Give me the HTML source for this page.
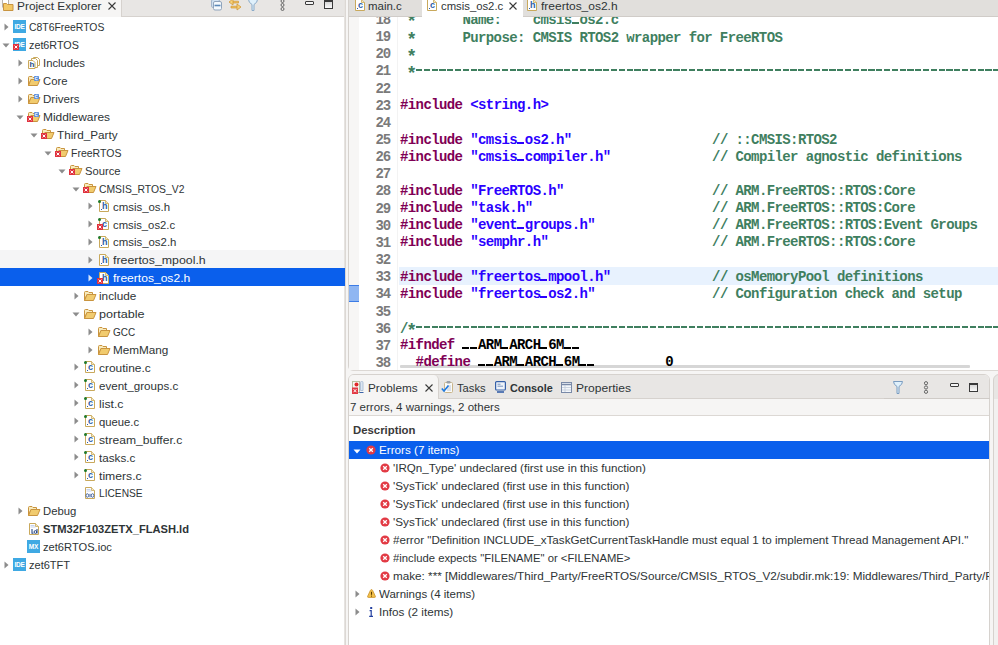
<!DOCTYPE html><html><head><meta charset="utf-8"><style>
*{margin:0;padding:0;box-sizing:border-box}
html,body{width:998px;height:645px;overflow:hidden;background:#fff;font-family:"Liberation Sans",sans-serif;font-size:12px;color:#2e3436}
.a{position:absolute}
.t{position:absolute;white-space:nowrap}
.code{position:absolute;font-family:"Liberation Mono",monospace;font-weight:bold;font-size:14px;letter-spacing:-0.6px;white-space:pre;line-height:17.15px;height:17.15px}
.ln{position:absolute;font-family:"Liberation Mono",monospace;font-weight:bold;font-size:14px;letter-spacing:-1.1px;color:#7a7a7a;text-align:right;width:40px;line-height:17.15px}
.ast{display:inline-block;width:7.8px;font-size:18px;position:relative;top:3px;left:-1.5px;letter-spacing:0}
.us{display:inline-block;width:7.8px;height:2px;background:linear-gradient(90deg,transparent 0.5px,currentColor 0.5px,currentColor 7.3px,transparent 7.3px);vertical-align:baseline}
.kw{color:#7f0055}.st{color:#2a00ff}.cm{color:#3f7f5f}.pl{color:#000}
svg{position:absolute}
</style></head><body>
<div class="a" style="left:0;top:0;width:345px;height:645px;background:#fff"></div>
<div class="a" style="left:0;top:0;width:345px;height:17px;background:#e8e6e4;border-bottom:1px solid #d6d2ce"></div>
<div class="a" style="left:0;top:0;width:122px;height:17px;background:#f6f5f4;border-right:1px solid #d6d2ce"></div>
<svg style="left:2px;top:-1px" width="12" height="12" viewBox="0 0 12 12"><rect x="0.5" y="0" width="6" height="8" fill="#fff" stroke="#b9b3aa"/><path d="M1.5 4.5h3l1 1h5.5v6h-9.5z" fill="#f3c865" stroke="#c89440"/></svg>
<div class="t" style="left:17px;top:-3.50px;font-size:11.5px;line-height:18px;font-weight:normal;color:#2e3436;transform:scaleX(1.0329);transform-origin:0 0;">Project Explorer</div>
<svg style="left:108px;top:2px" width="8" height="8" viewBox="0 0 8 8"><path d="M0.5 0.5L7.5 7.5M7.5 0.5L0.5 7.5" stroke="#3a3a3a" stroke-width="1.1"/></svg>
<svg style="left:211px;top:-1px" width="11" height="12" viewBox="0 0 11 12"><rect x="0.5" y="0.5" width="8" height="8" rx="1.5" fill="#cfe0f0" stroke="#a4b6cc"/><rect x="2.5" y="2.5" width="8" height="8.5" rx="1.5" fill="#f4f9fd" stroke="#90a4bc"/><path d="M3.5 6.5h6" stroke="#5a88b8" stroke-width="1.6"/></svg>
<svg style="left:228px;top:-1px" width="14" height="12" viewBox="0 0 14 12"><path d="M4.5 2.2H10.5V4H4.5z" fill="#f0c060" stroke="#d09838" stroke-width="0.7"/><path d="M1 3L5 0V6Z" fill="#f7d27a" stroke="#d09838" stroke-width="0.8"/><path d="M3 7.2H9.5V9H3z" fill="#f0c060" stroke="#d09838" stroke-width="0.7"/><path d="M13 8L9 5V11Z" fill="#f7d27a" stroke="#d09838" stroke-width="0.8"/></svg>
<svg style="left:248px;top:-1px" width="10" height="12" viewBox="0 0 10 12"><path d="M0.5 0.5h9Q9.5 3.5 6 5.5v6h-2v-6Q0.5 3.5 0.5 0.5z" fill="#dff0fb" stroke="#8aaac8"/></svg>
<svg style="left:280px;top:-1px" width="5" height="12" viewBox="0 0 5 12"><circle cx="2.5" cy="2" r="1.5" fill="none" stroke="#666"/><circle cx="2.5" cy="6" r="1.5" fill="none" stroke="#666"/><circle cx="2.5" cy="10" r="1.5" fill="none" stroke="#666"/></svg>
<div class="a" style="left:305px;top:1px;width:9px;height:4px;border:1px solid #3a3a3a;border-radius:1px;background:#f4f4f4"></div>
<div class="a" style="left:324px;top:0px;width:9px;height:9px;border:1px solid #3a3a3a;border-top-width:2px;background:linear-gradient(#d8d8d8,#fafafa)"></div>
<div class="a" style="left:344px;top:0;width:1px;height:645px;background:#e6e3e0"></div>
<div class="a" style="left:345px;top:0;width:1px;height:645px;background:#dcd8d4"></div>
<div class="a" style="left:346px;top:0;width:2px;height:645px;background:#f6f5f4"></div>
<svg style="left:3.5px;top:23px" width="5" height="8" viewBox="0 0 5 8"><path d="M0.5 0.5L4.5 4L0.5 7.5z" fill="#8c8c8c"/></svg>
<div class="a" style="left:13px;top:20px;width:13px;height:13px;background:#3fa9e3"></div><div class="a" style="left:13px;top:20px;width:13px;height:13px;color:#fff;font-size:6.5px;font-weight:bold;line-height:13px;text-align:center;letter-spacing:-0.2px">IDE</div>
<div class="t" style="left:29px;top:18.30px;font-size:11.5px;line-height:18px;font-weight:normal;color:#2e3436;transform:scaleX(0.9052);transform-origin:0 0;">C8T6FreeRTOS</div>
<svg style="left:2px;top:43px" width="8" height="5" viewBox="0 0 8 5"><path d="M0.5 0.5L7.5 0.5L4 4.5z" fill="#8c8c8c"/></svg>
<div class="a" style="left:13px;top:38px;width:13px;height:13px;background:#3fa9e3"></div><div class="a" style="left:13px;top:38px;width:13px;height:13px;color:#fff;font-size:6.5px;font-weight:bold;line-height:13px;text-align:center;letter-spacing:-0.2px">IDE</div><svg style="left:13px;top:44px" width="6" height="6" viewBox="0 0 6 6"><rect x="0" y="0" width="6" height="6" fill="#e0323e"/><path d="M1.6 1.6L4.4 4.4M4.4 1.6L1.6 4.4" stroke="#fff" stroke-width="1"/></svg>
<div class="t" style="left:29px;top:36.23px;font-size:11.5px;line-height:18px;font-weight:normal;color:#2e3436;transform:scaleX(0.9368);transform-origin:0 0;">zet6RTOS</div>
<svg style="left:17.5px;top:59px" width="5" height="8" viewBox="0 0 5 8"><path d="M0.5 0.5L4.5 4L0.5 7.5z" fill="#8c8c8c"/></svg>
<svg style="left:28px;top:57px" width="12" height="12" viewBox="0 0 12 12"><path d="M5.5 0.5h4l2 2v6h-6z" fill="#fff" stroke="#c9a95c"/><path d="M3.5 1.5h4l2 2v7h-6z" fill="#fff" stroke="#c9a95c"/><path d="M0.5 3.5h4.5l2 2v6h-6.5z" fill="#fff" stroke="#c9a95c"/></svg><div class="a" style="left:29.5px;top:61px;font-size:8px;line-height:8px;font-weight:bold;color:#2b4f88">h</div>
<div class="t" style="left:43px;top:54.16px;font-size:11.5px;line-height:18px;font-weight:normal;color:#2e3436;transform:scaleX(0.9806);transform-origin:0 0;">Includes</div>
<svg style="left:17.5px;top:77px" width="5" height="8" viewBox="0 0 5 8"><path d="M0.5 0.5L4.5 4L0.5 7.5z" fill="#8c8c8c"/></svg>
<svg style="left:28px;top:76px" width="13" height="10" viewBox="0 0 13 10"><path d="M0.5 9.5V1.5Q0.5 0.5 1.5 0.5H4L5 1.5H8.5V3.5H3Z" fill="#f8ebbd" stroke="#c9943f"/><path d="M0.5 9.5L3 3.5H12L9.5 9.5Z" fill="#f1cb6e" stroke="#c9943f"/></svg><svg style="left:34px;top:76px" width="5" height="5" viewBox="0 0 5 5"><rect width="5" height="5" rx="0.8" fill="#5b8edb"/><path d="M3.6 1.3H2Q1.2 1.3 1.2 2.5Q1.2 3.7 2 3.7H3.6" stroke="#fff" stroke-width="0.9" fill="none"/></svg>
<div class="t" style="left:43px;top:72.09px;font-size:11.5px;line-height:18px;font-weight:normal;color:#2e3436;transform:scaleX(0.9829);transform-origin:0 0;">Core</div>
<svg style="left:17.5px;top:95px" width="5" height="8" viewBox="0 0 5 8"><path d="M0.5 0.5L4.5 4L0.5 7.5z" fill="#8c8c8c"/></svg>
<svg style="left:28px;top:94px" width="13" height="10" viewBox="0 0 13 10"><path d="M0.5 9.5V1.5Q0.5 0.5 1.5 0.5H4L5 1.5H8.5V3.5H3Z" fill="#f8ebbd" stroke="#c9943f"/><path d="M0.5 9.5L3 3.5H12L9.5 9.5Z" fill="#f1cb6e" stroke="#c9943f"/></svg><svg style="left:34px;top:94px" width="5" height="5" viewBox="0 0 5 5"><rect width="5" height="5" rx="0.8" fill="#5b8edb"/><path d="M3.6 1.3H2Q1.2 1.3 1.2 2.5Q1.2 3.7 2 3.7H3.6" stroke="#fff" stroke-width="0.9" fill="none"/></svg>
<div class="t" style="left:43px;top:90.02px;font-size:11.5px;line-height:18px;font-weight:normal;color:#2e3436;transform:scaleX(1.0051);transform-origin:0 0;">Drivers</div>
<svg style="left:16px;top:115px" width="8" height="5" viewBox="0 0 8 5"><path d="M0.5 0.5L7.5 0.5L4 4.5z" fill="#8c8c8c"/></svg>
<svg style="left:28px;top:112px" width="13" height="10" viewBox="0 0 13 10"><path d="M0.5 9.5V1.5Q0.5 0.5 1.5 0.5H4L5 1.5H8.5V3.5H3Z" fill="#f8ebbd" stroke="#c9943f"/><path d="M0.5 9.5L3 3.5H12L9.5 9.5Z" fill="#f1cb6e" stroke="#c9943f"/></svg><svg style="left:34px;top:112px" width="5" height="5" viewBox="0 0 5 5"><rect width="5" height="5" rx="0.8" fill="#5b8edb"/><path d="M3.6 1.3H2Q1.2 1.3 1.2 2.5Q1.2 3.7 2 3.7H3.6" stroke="#fff" stroke-width="0.9" fill="none"/></svg><svg style="left:27px;top:116px" width="6" height="6" viewBox="0 0 6 6"><rect x="0" y="0" width="6" height="6" fill="#e0323e"/><path d="M1.6 1.6L4.4 4.4M4.4 1.6L1.6 4.4" stroke="#fff" stroke-width="1"/></svg>
<div class="t" style="left:43px;top:107.95px;font-size:11.5px;line-height:18px;font-weight:normal;color:#2e3436;transform:scaleX(1.0379);transform-origin:0 0;">Middlewares</div>
<svg style="left:30px;top:133px" width="8" height="5" viewBox="0 0 8 5"><path d="M0.5 0.5L7.5 0.5L4 4.5z" fill="#8c8c8c"/></svg>
<svg style="left:42px;top:129px" width="13" height="10" viewBox="0 0 13 10"><path d="M0.5 9.5V1.5Q0.5 0.5 1.5 0.5H4L5 1.5H8.5V3.5H3Z" fill="#f8ebbd" stroke="#c9943f"/><path d="M0.5 9.5L3 3.5H12L9.5 9.5Z" fill="#f1cb6e" stroke="#c9943f"/></svg><svg style="left:41px;top:133px" width="6" height="6" viewBox="0 0 6 6"><rect x="0" y="0" width="6" height="6" fill="#e0323e"/><path d="M1.6 1.6L4.4 4.4M4.4 1.6L1.6 4.4" stroke="#fff" stroke-width="1"/></svg>
<div class="t" style="left:57px;top:125.88px;font-size:11.5px;line-height:18px;font-weight:normal;color:#2e3436;transform:scaleX(1.0196);transform-origin:0 0;">Third_Party</div>
<svg style="left:44px;top:151px" width="8" height="5" viewBox="0 0 8 5"><path d="M0.5 0.5L7.5 0.5L4 4.5z" fill="#8c8c8c"/></svg>
<svg style="left:56px;top:147px" width="13" height="10" viewBox="0 0 13 10"><path d="M0.5 9.5V1.5Q0.5 0.5 1.5 0.5H4L5 1.5H8.5V3.5H3Z" fill="#f8ebbd" stroke="#c9943f"/><path d="M0.5 9.5L3 3.5H12L9.5 9.5Z" fill="#f1cb6e" stroke="#c9943f"/></svg><svg style="left:55px;top:151px" width="6" height="6" viewBox="0 0 6 6"><rect x="0" y="0" width="6" height="6" fill="#e0323e"/><path d="M1.6 1.6L4.4 4.4M4.4 1.6L1.6 4.4" stroke="#fff" stroke-width="1"/></svg>
<div class="t" style="left:71px;top:143.81px;font-size:11.5px;line-height:18px;font-weight:normal;color:#2e3436;transform:scaleX(0.9135);transform-origin:0 0;">FreeRTOS</div>
<svg style="left:58px;top:169px" width="8" height="5" viewBox="0 0 8 5"><path d="M0.5 0.5L7.5 0.5L4 4.5z" fill="#8c8c8c"/></svg>
<svg style="left:70px;top:165px" width="13" height="10" viewBox="0 0 13 10"><path d="M0.5 9.5V1.5Q0.5 0.5 1.5 0.5H4L5 1.5H8.5V3.5H3Z" fill="#f8ebbd" stroke="#c9943f"/><path d="M0.5 9.5L3 3.5H12L9.5 9.5Z" fill="#f1cb6e" stroke="#c9943f"/></svg><svg style="left:69px;top:169px" width="6" height="6" viewBox="0 0 6 6"><rect x="0" y="0" width="6" height="6" fill="#e0323e"/><path d="M1.6 1.6L4.4 4.4M4.4 1.6L1.6 4.4" stroke="#fff" stroke-width="1"/></svg>
<div class="t" style="left:85px;top:161.74px;font-size:11.5px;line-height:18px;font-weight:normal;color:#2e3436;transform:scaleX(0.9743);transform-origin:0 0;">Source</div>
<svg style="left:72px;top:187px" width="8" height="5" viewBox="0 0 8 5"><path d="M0.5 0.5L7.5 0.5L4 4.5z" fill="#8c8c8c"/></svg>
<svg style="left:84px;top:183px" width="13" height="10" viewBox="0 0 13 10"><path d="M0.5 9.5V1.5Q0.5 0.5 1.5 0.5H4L5 1.5H8.5V3.5H3Z" fill="#f8ebbd" stroke="#c9943f"/><path d="M0.5 9.5L3 3.5H12L9.5 9.5Z" fill="#f1cb6e" stroke="#c9943f"/></svg><svg style="left:83px;top:187px" width="6" height="6" viewBox="0 0 6 6"><rect x="0" y="0" width="6" height="6" fill="#e0323e"/><path d="M1.6 1.6L4.4 4.4M4.4 1.6L1.6 4.4" stroke="#fff" stroke-width="1"/></svg>
<div class="t" style="left:99px;top:179.67px;font-size:11.5px;line-height:18px;font-weight:normal;color:#2e3436;transform:scaleX(0.9008);transform-origin:0 0;">CMSIS_RTOS_V2</div>
<svg style="left:87.5px;top:202px" width="5" height="8" viewBox="0 0 5 8"><path d="M0.5 0.5L4.5 4L0.5 7.5z" fill="#8c8c8c"/></svg>
<svg style="left:99px;top:200px" width="10" height="12" viewBox="0 0 10 12"><path d="M0.5 0.5h6l3 3v8h-9z" fill="#fff" stroke="#c9a95c"/><path d="M6.5 0.5v3h3" fill="#f3e6c0" stroke="#c9a95c" stroke-width="0.8"/></svg><div class="a" style="left:102px;top:201px;font-size:9px;line-height:11px;font-weight:bold;color:#2b5ea8">h</div><div class="a" style="left:101px;top:209px;width:1px;height:1px;background:#2b5ea8"></div><div class="a" style="left:98px;top:200px;width:3px;height:3px;border-radius:50%;background:#1f7a2a"></div>
<div class="t" style="left:113px;top:197.60px;font-size:11.5px;line-height:18px;font-weight:normal;color:#2e3436;transform:scaleX(0.9928);transform-origin:0 0;">cmsis_os.h</div>
<svg style="left:87.5px;top:220px" width="5" height="8" viewBox="0 0 5 8"><path d="M0.5 0.5L4.5 4L0.5 7.5z" fill="#8c8c8c"/></svg>
<svg style="left:99px;top:218px" width="10" height="12" viewBox="0 0 10 12"><path d="M0.5 0.5h6l3 3v8h-9z" fill="#fff" stroke="#c9a95c"/><path d="M6.5 0.5v3h3" fill="#f3e6c0" stroke="#c9a95c" stroke-width="0.8"/></svg><div class="a" style="left:102px;top:219px;font-size:9px;line-height:11px;font-weight:bold;color:#2b5ea8">c</div><div class="a" style="left:101px;top:227px;width:1px;height:1px;background:#2b5ea8"></div><div class="a" style="left:98px;top:218px;width:3px;height:3px;border-radius:50%;background:#1f7a2a"></div><svg style="left:97px;top:224px" width="6" height="6" viewBox="0 0 6 6"><rect x="0" y="0" width="6" height="6" fill="#e0323e"/><path d="M1.6 1.6L4.4 4.4M4.4 1.6L1.6 4.4" stroke="#fff" stroke-width="1"/></svg>
<div class="t" style="left:113px;top:215.53px;font-size:11.5px;line-height:18px;font-weight:normal;color:#2e3436;transform:scaleX(0.9816);transform-origin:0 0;">cmsis_os2.c</div>
<svg style="left:87.5px;top:238px" width="5" height="8" viewBox="0 0 5 8"><path d="M0.5 0.5L4.5 4L0.5 7.5z" fill="#8c8c8c"/></svg>
<svg style="left:99px;top:236px" width="10" height="12" viewBox="0 0 10 12"><path d="M0.5 0.5h6l3 3v8h-9z" fill="#fff" stroke="#c9a95c"/><path d="M6.5 0.5v3h3" fill="#f3e6c0" stroke="#c9a95c" stroke-width="0.8"/></svg><div class="a" style="left:102px;top:237px;font-size:9px;line-height:11px;font-weight:bold;color:#2b5ea8">h</div><div class="a" style="left:101px;top:245px;width:1px;height:1px;background:#2b5ea8"></div><div class="a" style="left:98px;top:236px;width:3px;height:3px;border-radius:50%;background:#1f7a2a"></div>
<div class="t" style="left:113px;top:233.46px;font-size:11.5px;line-height:18px;font-weight:normal;color:#2e3436;transform:scaleX(0.9920);transform-origin:0 0;">cmsis_os2.h</div>
<div class="a" style="left:0;top:250.39px;width:344px;height:17.93px;background:#f5f5f6"></div>
<svg style="left:87.5px;top:256px" width="5" height="8" viewBox="0 0 5 8"><path d="M0.5 0.5L4.5 4L0.5 7.5z" fill="#8c8c8c"/></svg>
<svg style="left:99px;top:254px" width="10" height="12" viewBox="0 0 10 12"><path d="M0.5 0.5h6l3 3v8h-9z" fill="#fff" stroke="#c9a95c"/><path d="M6.5 0.5v3h3" fill="#f3e6c0" stroke="#c9a95c" stroke-width="0.8"/></svg><div class="a" style="left:102px;top:255px;font-size:9px;line-height:11px;font-weight:bold;color:#2b5ea8">h</div><div class="a" style="left:101px;top:263px;width:1px;height:1px;background:#2b5ea8"></div>
<div class="t" style="left:113px;top:251.39px;font-size:11.5px;line-height:18px;font-weight:normal;color:#2e3436;transform:scaleX(1.0742);transform-origin:0 0;">freertos_mpool.h</div>
<div class="a" style="left:0;top:268.32px;width:344.6px;height:17.93px;background:#0a5fec"></div>
<svg style="left:87.5px;top:274px" width="5" height="8" viewBox="0 0 5 8"><path d="M0.5 0.5L4.5 4L0.5 7.5z" fill="#d8e6fc"/></svg>
<svg style="left:99px;top:272px" width="10" height="12" viewBox="0 0 10 12"><path d="M0.5 0.5h6l3 3v8h-9z" fill="#fff" stroke="#c9a95c"/><path d="M6.5 0.5v3h3" fill="#f3e6c0" stroke="#c9a95c" stroke-width="0.8"/></svg><div class="a" style="left:102px;top:273px;font-size:9px;line-height:11px;font-weight:bold;color:#2b5ea8">h</div><div class="a" style="left:101px;top:281px;width:1px;height:1px;background:#2b5ea8"></div><svg style="left:97px;top:278px" width="6" height="6" viewBox="0 0 6 6"><rect x="0" y="0" width="6" height="6" fill="#e0323e"/><path d="M1.6 1.6L4.4 4.4M4.4 1.6L1.6 4.4" stroke="#fff" stroke-width="1"/></svg>
<div class="t" style="left:113px;top:269.32px;font-size:11.5px;line-height:18px;font-weight:normal;color:#ffffff;transform:scaleX(1.0501);transform-origin:0 0;">freertos_os2.h</div>
<svg style="left:73.5px;top:292px" width="5" height="8" viewBox="0 0 5 8"><path d="M0.5 0.5L4.5 4L0.5 7.5z" fill="#8c8c8c"/></svg>
<svg style="left:84px;top:291px" width="13" height="10" viewBox="0 0 13 10"><path d="M0.5 9.5V1.5Q0.5 0.5 1.5 0.5H4L5 1.5H8.5V3.5H3Z" fill="#f8ebbd" stroke="#c9943f"/><path d="M0.5 9.5L3 3.5H12L9.5 9.5Z" fill="#f1cb6e" stroke="#c9943f"/></svg>
<div class="t" style="left:99px;top:287.25px;font-size:11.5px;line-height:18px;font-weight:normal;color:#2e3436;transform:scaleX(1.0235);transform-origin:0 0;">include</div>
<svg style="left:72px;top:312px" width="8" height="5" viewBox="0 0 8 5"><path d="M0.5 0.5L7.5 0.5L4 4.5z" fill="#8c8c8c"/></svg>
<svg style="left:84px;top:309px" width="13" height="10" viewBox="0 0 13 10"><path d="M0.5 9.5V1.5Q0.5 0.5 1.5 0.5H4L5 1.5H8.5V3.5H3Z" fill="#f8ebbd" stroke="#c9943f"/><path d="M0.5 9.5L3 3.5H12L9.5 9.5Z" fill="#f1cb6e" stroke="#c9943f"/></svg>
<div class="t" style="left:99px;top:305.18px;font-size:11.5px;line-height:18px;font-weight:normal;color:#2e3436;transform:scaleX(1.0973);transform-origin:0 0;">portable</div>
<svg style="left:87.5px;top:328px" width="5" height="8" viewBox="0 0 5 8"><path d="M0.5 0.5L4.5 4L0.5 7.5z" fill="#8c8c8c"/></svg>
<svg style="left:98px;top:327px" width="13" height="10" viewBox="0 0 13 10"><path d="M0.5 9.5V1.5Q0.5 0.5 1.5 0.5H4L5 1.5H8.5V3.5H3Z" fill="#f8ebbd" stroke="#c9943f"/><path d="M0.5 9.5L3 3.5H12L9.5 9.5Z" fill="#f1cb6e" stroke="#c9943f"/></svg>
<div class="t" style="left:113px;top:323.11px;font-size:11.5px;line-height:18px;font-weight:normal;color:#2e3436;transform:scaleX(0.8648);transform-origin:0 0;">GCC</div>
<svg style="left:87.5px;top:346px" width="5" height="8" viewBox="0 0 5 8"><path d="M0.5 0.5L4.5 4L0.5 7.5z" fill="#8c8c8c"/></svg>
<svg style="left:98px;top:345px" width="13" height="10" viewBox="0 0 13 10"><path d="M0.5 9.5V1.5Q0.5 0.5 1.5 0.5H4L5 1.5H8.5V3.5H3Z" fill="#f8ebbd" stroke="#c9943f"/><path d="M0.5 9.5L3 3.5H12L9.5 9.5Z" fill="#f1cb6e" stroke="#c9943f"/></svg>
<div class="t" style="left:113px;top:341.04px;font-size:11.5px;line-height:18px;font-weight:normal;color:#2e3436;transform:scaleX(1.0198);transform-origin:0 0;">MemMang</div>
<svg style="left:73.5px;top:363px" width="5" height="8" viewBox="0 0 5 8"><path d="M0.5 0.5L4.5 4L0.5 7.5z" fill="#8c8c8c"/></svg>
<svg style="left:85px;top:361px" width="10" height="12" viewBox="0 0 10 12"><path d="M0.5 0.5h6l3 3v8h-9z" fill="#fff" stroke="#c9a95c"/><path d="M6.5 0.5v3h3" fill="#f3e6c0" stroke="#c9a95c" stroke-width="0.8"/></svg><div class="a" style="left:88px;top:362px;font-size:9px;line-height:11px;font-weight:bold;color:#2b5ea8">c</div><div class="a" style="left:87px;top:370px;width:1px;height:1px;background:#2b5ea8"></div><div class="a" style="left:84px;top:361px;width:3px;height:3px;border-radius:50%;background:#1f7a2a"></div>
<div class="t" style="left:99px;top:358.97px;font-size:11.5px;line-height:18px;font-weight:normal;color:#2e3436;transform:scaleX(1.0390);transform-origin:0 0;">croutine.c</div>
<svg style="left:73.5px;top:381px" width="5" height="8" viewBox="0 0 5 8"><path d="M0.5 0.5L4.5 4L0.5 7.5z" fill="#8c8c8c"/></svg>
<svg style="left:85px;top:379px" width="10" height="12" viewBox="0 0 10 12"><path d="M0.5 0.5h6l3 3v8h-9z" fill="#fff" stroke="#c9a95c"/><path d="M6.5 0.5v3h3" fill="#f3e6c0" stroke="#c9a95c" stroke-width="0.8"/></svg><div class="a" style="left:88px;top:380px;font-size:9px;line-height:11px;font-weight:bold;color:#2b5ea8">c</div><div class="a" style="left:87px;top:388px;width:1px;height:1px;background:#2b5ea8"></div><div class="a" style="left:84px;top:379px;width:3px;height:3px;border-radius:50%;background:#1f7a2a"></div>
<div class="t" style="left:99px;top:376.90px;font-size:11.5px;line-height:18px;font-weight:normal;color:#2e3436;transform:scaleX(1.0072);transform-origin:0 0;">event_groups.c</div>
<svg style="left:73.5px;top:399px" width="5" height="8" viewBox="0 0 5 8"><path d="M0.5 0.5L4.5 4L0.5 7.5z" fill="#8c8c8c"/></svg>
<svg style="left:85px;top:397px" width="10" height="12" viewBox="0 0 10 12"><path d="M0.5 0.5h6l3 3v8h-9z" fill="#fff" stroke="#c9a95c"/><path d="M6.5 0.5v3h3" fill="#f3e6c0" stroke="#c9a95c" stroke-width="0.8"/></svg><div class="a" style="left:88px;top:398px;font-size:9px;line-height:11px;font-weight:bold;color:#2b5ea8">c</div><div class="a" style="left:87px;top:406px;width:1px;height:1px;background:#2b5ea8"></div><div class="a" style="left:84px;top:397px;width:3px;height:3px;border-radius:50%;background:#1f7a2a"></div>
<div class="t" style="left:99px;top:394.83px;font-size:11.5px;line-height:18px;font-weight:normal;color:#2e3436;transform:scaleX(1.0652);transform-origin:0 0;">list.c</div>
<svg style="left:73.5px;top:417px" width="5" height="8" viewBox="0 0 5 8"><path d="M0.5 0.5L4.5 4L0.5 7.5z" fill="#8c8c8c"/></svg>
<svg style="left:85px;top:415px" width="10" height="12" viewBox="0 0 10 12"><path d="M0.5 0.5h6l3 3v8h-9z" fill="#fff" stroke="#c9a95c"/><path d="M6.5 0.5v3h3" fill="#f3e6c0" stroke="#c9a95c" stroke-width="0.8"/></svg><div class="a" style="left:88px;top:416px;font-size:9px;line-height:11px;font-weight:bold;color:#2b5ea8">c</div><div class="a" style="left:87px;top:424px;width:1px;height:1px;background:#2b5ea8"></div><div class="a" style="left:84px;top:415px;width:3px;height:3px;border-radius:50%;background:#1f7a2a"></div>
<div class="t" style="left:99px;top:412.76px;font-size:11.5px;line-height:18px;font-weight:normal;color:#2e3436;transform:scaleX(0.9799);transform-origin:0 0;">queue.c</div>
<svg style="left:73.5px;top:435px" width="5" height="8" viewBox="0 0 5 8"><path d="M0.5 0.5L4.5 4L0.5 7.5z" fill="#8c8c8c"/></svg>
<svg style="left:85px;top:433px" width="10" height="12" viewBox="0 0 10 12"><path d="M0.5 0.5h6l3 3v8h-9z" fill="#fff" stroke="#c9a95c"/><path d="M6.5 0.5v3h3" fill="#f3e6c0" stroke="#c9a95c" stroke-width="0.8"/></svg><div class="a" style="left:88px;top:434px;font-size:9px;line-height:11px;font-weight:bold;color:#2b5ea8">c</div><div class="a" style="left:87px;top:442px;width:1px;height:1px;background:#2b5ea8"></div><div class="a" style="left:84px;top:433px;width:3px;height:3px;border-radius:50%;background:#1f7a2a"></div>
<div class="t" style="left:99px;top:430.69px;font-size:11.5px;line-height:18px;font-weight:normal;color:#2e3436;transform:scaleX(1.0525);transform-origin:0 0;">stream_buffer.c</div>
<svg style="left:73.5px;top:453px" width="5" height="8" viewBox="0 0 5 8"><path d="M0.5 0.5L4.5 4L0.5 7.5z" fill="#8c8c8c"/></svg>
<svg style="left:85px;top:451px" width="10" height="12" viewBox="0 0 10 12"><path d="M0.5 0.5h6l3 3v8h-9z" fill="#fff" stroke="#c9a95c"/><path d="M6.5 0.5v3h3" fill="#f3e6c0" stroke="#c9a95c" stroke-width="0.8"/></svg><div class="a" style="left:88px;top:452px;font-size:9px;line-height:11px;font-weight:bold;color:#2b5ea8">c</div><div class="a" style="left:87px;top:460px;width:1px;height:1px;background:#2b5ea8"></div><div class="a" style="left:84px;top:451px;width:3px;height:3px;border-radius:50%;background:#1f7a2a"></div>
<div class="t" style="left:99px;top:448.62px;font-size:11.5px;line-height:18px;font-weight:normal;color:#2e3436;transform:scaleX(1.0144);transform-origin:0 0;">tasks.c</div>
<svg style="left:73.5px;top:471px" width="5" height="8" viewBox="0 0 5 8"><path d="M0.5 0.5L4.5 4L0.5 7.5z" fill="#8c8c8c"/></svg>
<svg style="left:85px;top:469px" width="10" height="12" viewBox="0 0 10 12"><path d="M0.5 0.5h6l3 3v8h-9z" fill="#fff" stroke="#c9a95c"/><path d="M6.5 0.5v3h3" fill="#f3e6c0" stroke="#c9a95c" stroke-width="0.8"/></svg><div class="a" style="left:88px;top:470px;font-size:9px;line-height:11px;font-weight:bold;color:#2b5ea8">c</div><div class="a" style="left:87px;top:478px;width:1px;height:1px;background:#2b5ea8"></div><div class="a" style="left:84px;top:469px;width:3px;height:3px;border-radius:50%;background:#1f7a2a"></div>
<div class="t" style="left:99px;top:466.55px;font-size:11.5px;line-height:18px;font-weight:normal;color:#2e3436;transform:scaleX(1.0584);transform-origin:0 0;">timers.c</div>
<svg style="left:85px;top:487px" width="10" height="12" viewBox="0 0 10 12"><path d="M0.5 0.5h6l3 3v8h-9z" fill="#fff" stroke="#c9a95c"/><path d="M6.5 0.5v3h3" fill="#f3e6c0" stroke="#c9a95c" stroke-width="0.8"/></svg>
<svg style="left:85px;top:487px" width="10" height="12" viewBox="0 0 10 12"><path d="M1.5 2.5h4M1.5 4h5" stroke="#b8c8e8" stroke-width="0.8"/><ellipse cx="2.3" cy="8.5" rx="1.3" ry="1.8" fill="none" stroke="#3a5a98" stroke-width="0.9"/><path d="M5 6.8v3.5" stroke="#3a5a98" stroke-width="1"/><ellipse cx="7.6" cy="8.5" rx="1.3" ry="1.8" fill="none" stroke="#3a5a98" stroke-width="0.9"/></svg>
<div class="t" style="left:99px;top:484.48px;font-size:11.5px;line-height:18px;font-weight:normal;color:#2e3436;transform:scaleX(0.8860);transform-origin:0 0;">LICENSE</div>
<svg style="left:17.5px;top:507px" width="5" height="8" viewBox="0 0 5 8"><path d="M0.5 0.5L4.5 4L0.5 7.5z" fill="#8c8c8c"/></svg>
<svg style="left:28px;top:506px" width="13" height="10" viewBox="0 0 13 10"><path d="M0.5 9.5V1.5Q0.5 0.5 1.5 0.5H4L5 1.5H8.5V3.5H3Z" fill="#f8ebbd" stroke="#c9943f"/><path d="M0.5 9.5L3 3.5H12L9.5 9.5Z" fill="#f1cb6e" stroke="#c9943f"/></svg>
<div class="t" style="left:43px;top:502.41px;font-size:11.5px;line-height:18px;font-weight:normal;color:#2e3436;transform:scaleX(0.9827);transform-origin:0 0;">Debug</div>
<svg style="left:29px;top:523px" width="10" height="12" viewBox="0 0 10 12"><path d="M0.5 0.5h6l3 3v8h-9z" fill="#fff" stroke="#c9a95c"/><path d="M6.5 0.5v3h3" fill="#f3e6c0" stroke="#c9a95c" stroke-width="0.8"/></svg>
<svg style="left:29px;top:523px" width="10" height="12" viewBox="0 0 10 12"><path d="M1.5 2.5h4M1.5 4h5" stroke="#b8c8e8" stroke-width="0.8"/><path d="M3 6v4.3h1.5" stroke="#2a4a88" stroke-width="1.1" fill="none"/><path d="M8 6v4.5" stroke="#2a4a88" stroke-width="1.1"/><ellipse cx="6.4" cy="9" rx="1.3" ry="1.4" fill="none" stroke="#2a4a88" stroke-width="1"/></svg>
<div class="t" style="left:43px;top:520.34px;font-size:11.5px;line-height:18px;font-weight:bold;color:#2e3436;transform:scaleX(0.9681);transform-origin:0 0;">STM32F103ZETX_FLASH.ld</div>
<div class="a" style="left:27px;top:540px;width:13px;height:13px;background:#3fa9e3"></div><div class="a" style="left:27px;top:540px;width:13px;height:13px;color:#fff;font-size:6.5px;font-weight:bold;line-height:13px;text-align:center;letter-spacing:-0.2px">MX</div>
<div class="t" style="left:43px;top:538.27px;font-size:11.5px;line-height:18px;font-weight:normal;color:#2e3436;transform:scaleX(0.9682);transform-origin:0 0;">zet6RTOS.ioc</div>
<svg style="left:3.5px;top:561px" width="5" height="8" viewBox="0 0 5 8"><path d="M0.5 0.5L4.5 4L0.5 7.5z" fill="#8c8c8c"/></svg>
<div class="a" style="left:13px;top:558px;width:13px;height:13px;background:#3fa9e3"></div><div class="a" style="left:13px;top:558px;width:13px;height:13px;color:#fff;font-size:6.5px;font-weight:bold;line-height:13px;text-align:center;letter-spacing:-0.2px">IDE</div>
<div class="t" style="left:29px;top:556.20px;font-size:11.5px;line-height:18px;font-weight:normal;color:#2e3436;transform:scaleX(0.9600);transform-origin:0 0;">zet6TFT</div>
<div class="a" style="left:346px;top:0;width:652px;height:645px;background:#f6f5f4"></div>
<div class="a" style="left:348px;top:0;width:650px;height:371px;background:#fff;border-left:1px solid #d6d2ce;border-bottom:1px solid #dcd8d4;border-radius:0 0 0 5px"></div>
<div class="a" style="left:349px;top:0;width:649px;height:17px;background:#e1dfdc;border-bottom:1px solid #d0ccc8"></div>
<div class="a" style="left:421.5px;top:0;width:101px;height:17px;background:#fff"></div>
<svg style="left:355px;top:-1px" width="10" height="12" viewBox="0 0 10 12"><path d="M0.5 0.5h6l3 3v8h-9z" fill="#fff" stroke="#c9a95c"/><path d="M6.5 0.5v3h3" fill="#f3e6c0" stroke="#c9a95c" stroke-width="0.8"/></svg><div class="a" style="left:358px;top:0px;font-size:9px;line-height:11px;font-weight:bold;color:#2b5ea8">c</div><div class="a" style="left:357px;top:8px;width:1px;height:1px;background:#2b5ea8"></div>
<div class="t" style="left:368.4px;top:-3.50px;font-size:11.5px;line-height:18px;font-weight:normal;color:#2e3436;transform:scaleX(0.9949);transform-origin:0 0;">main.c</div>
<svg style="left:427px;top:-1px" width="10" height="12" viewBox="0 0 10 12"><path d="M0.5 0.5h6l3 3v8h-9z" fill="#fff" stroke="#c9a95c"/><path d="M6.5 0.5v3h3" fill="#f3e6c0" stroke="#c9a95c" stroke-width="0.8"/></svg><div class="a" style="left:430px;top:0px;font-size:9px;line-height:11px;font-weight:bold;color:#2b5ea8">c</div><div class="a" style="left:429px;top:8px;width:1px;height:1px;background:#2b5ea8"></div>
<div class="t" style="left:440.6px;top:-3.50px;font-size:11.5px;line-height:18px;font-weight:normal;color:#2e3436;transform:scaleX(0.9831);transform-origin:0 0;">cmsis_os2.c</div>
<svg style="left:509px;top:2px" width="8" height="8" viewBox="0 0 8 8"><path d="M0.5 0.5L7.5 7.5M7.5 0.5L0.5 7.5" stroke="#3a3a3a" stroke-width="1.1"/></svg>
<svg style="left:527px;top:-1px" width="10" height="12" viewBox="0 0 10 12"><path d="M0.5 0.5h6l3 3v8h-9z" fill="#fff" stroke="#c9a95c"/><path d="M6.5 0.5v3h3" fill="#f3e6c0" stroke="#c9a95c" stroke-width="0.8"/></svg><div class="a" style="left:530px;top:0px;font-size:9px;line-height:11px;font-weight:bold;color:#2b5ea8">h</div><div class="a" style="left:529px;top:8px;width:1px;height:1px;background:#2b5ea8"></div>
<div class="t" style="left:541.3px;top:-3.50px;font-size:11.5px;line-height:18px;font-weight:normal;color:#2e3436;transform:scaleX(1.0420);transform-origin:0 0;">freertos_os2.h</div>
<div class="a" style="left:349px;top:17px;width:10px;height:353px;background:#f7f6f5"></div>
<div class="a" style="left:397px;top:17px;width:1px;height:353px;background:#f3f3f3"></div>
<div class="a" style="left:399px;top:267.40px;width:600px;height:17.15px;background:#e8f2fe"></div>
<div class="a" style="left:349px;top:284.55px;width:10px;height:17.15px;background:#8fb6f2;border-top:1px solid #3d7ce6;border-bottom:1px solid #3d7ce6"></div>
<div class="a" style="left:400px;top:365px;width:570px;height:3px;background:#d6d6d6;border-radius:1px"></div>
<div class="a" style="left:349px;top:17px;width:649px;height:353px;overflow:hidden">
<div class="ln" style="left:1px;top:-5.05px">18</div>
<div class="code" style="left:51px;top:-5.55px"><span class="cm"> <span class="ast">*</span>      Name:    cmsis<span class="us"></span>os2.c</span></div>
<div class="ln" style="left:1px;top:12.10px">19</div>
<div class="code" style="left:51px;top:11.60px"><span class="cm"> <span class="ast">*</span>      Purpose: CMSIS RTOS2 wrapper for FreeRTOS</span></div>
<div class="ln" style="left:1px;top:29.25px">20</div>
<div class="code" style="left:51px;top:28.75px"><span class="cm"> <span class="ast">*</span></span></div>
<div class="ln" style="left:1px;top:46.40px">21</div>
<div class="code" style="left:51px;top:45.90px"><span class="cm"> <span class="ast">*</span></span></div>
<div class="a" style="left:67.0px;top:52.00px;width:600px;height:2px;background:repeating-linear-gradient(90deg,#3f7f5f 0 6.2px,transparent 6.2px 7.8px)"></div>
<div class="ln" style="left:1px;top:63.55px">22</div>
<div class="code" style="left:51px;top:63.05px"></div>
<div class="ln" style="left:1px;top:80.70px">23</div>
<div class="code" style="left:51px;top:80.20px"><span class="kw">#include</span><span class="pl"> </span><span class="st">&lt;string.h&gt;</span></div>
<div class="ln" style="left:1px;top:97.85px">24</div>
<div class="code" style="left:51px;top:97.35px"></div>
<div class="ln" style="left:1px;top:115.00px">25</div>
<div class="code" style="left:51px;top:114.50px"><span class="kw">#include</span><span class="pl"> </span><span class="st">&quot;cmsis<span class="us"></span>os2.h&quot;</span><span class="pl">                  </span><span class="cm">// ::CMSIS:RTOS2</span></div>
<div class="ln" style="left:1px;top:132.15px">26</div>
<div class="code" style="left:51px;top:131.65px"><span class="kw">#include</span><span class="pl"> </span><span class="st">&quot;cmsis<span class="us"></span>compiler.h&quot;</span><span class="pl">             </span><span class="cm">// Compiler agnostic definitions</span></div>
<div class="ln" style="left:1px;top:149.30px">27</div>
<div class="code" style="left:51px;top:148.80px"></div>
<div class="ln" style="left:1px;top:166.45px">28</div>
<div class="code" style="left:51px;top:165.95px"><span class="kw">#include</span><span class="pl"> </span><span class="st">&quot;FreeRTOS.h&quot;</span><span class="pl">                   </span><span class="cm">// ARM.FreeRTOS::RTOS:Core</span></div>
<div class="ln" style="left:1px;top:183.60px">29</div>
<div class="code" style="left:51px;top:183.10px"><span class="kw">#include</span><span class="pl"> </span><span class="st">&quot;task.h&quot;</span><span class="pl">                       </span><span class="cm">// ARM.FreeRTOS::RTOS:Core</span></div>
<div class="ln" style="left:1px;top:200.75px">30</div>
<div class="code" style="left:51px;top:200.25px"><span class="kw">#include</span><span class="pl"> </span><span class="st">&quot;event<span class="us"></span>groups.h&quot;</span><span class="pl">               </span><span class="cm">// ARM.FreeRTOS::RTOS:Event Groups</span></div>
<div class="ln" style="left:1px;top:217.90px">31</div>
<div class="code" style="left:51px;top:217.40px"><span class="kw">#include</span><span class="pl"> </span><span class="st">&quot;semphr.h&quot;</span><span class="pl">                     </span><span class="cm">// ARM.FreeRTOS::RTOS:Core</span></div>
<div class="ln" style="left:1px;top:235.05px">32</div>
<div class="code" style="left:51px;top:234.55px"></div>
<div class="ln" style="left:1px;top:252.20px">33</div>
<div class="code" style="left:51px;top:251.70px"><span class="kw">#include</span><span class="pl"> </span><span class="st">&quot;freertos<span class="us"></span>mpool.h&quot;</span><span class="pl">             </span><span class="cm">// osMemoryPool definitions</span></div>
<div class="ln" style="left:1px;top:269.35px">34</div>
<div class="code" style="left:51px;top:268.85px"><span class="kw">#include</span><span class="pl"> </span><span class="st">&quot;freertos<span class="us"></span>os2.h&quot;</span><span class="pl">               </span><span class="cm">// Configuration check and setup</span></div>
<div class="ln" style="left:1px;top:286.50px">35</div>
<div class="code" style="left:51px;top:286.00px"></div>
<div class="ln" style="left:1px;top:303.65px">36</div>
<div class="code" style="left:51px;top:303.15px"><span class="cm">/<span class="ast">*</span></span></div>
<div class="a" style="left:67.0px;top:309.25px;width:600px;height:2px;background:repeating-linear-gradient(90deg,#3f7f5f 0 6.2px,transparent 6.2px 7.8px)"></div>
<div class="ln" style="left:1px;top:320.80px">37</div>
<div class="code" style="left:51px;top:320.30px"><span class="kw">#ifndef</span><span class="pl"> <span class="us"></span><span class="us"></span>ARM<span class="us"></span>ARCH<span class="us"></span>6M<span class="us"></span><span class="us"></span></span></div>
<div class="ln" style="left:1px;top:337.95px">38</div>
<div class="code" style="left:51px;top:337.45px"><span class="pl">  </span><span class="kw">#define</span><span class="pl"> <span class="us"></span><span class="us"></span>ARM<span class="us"></span>ARCH<span class="us"></span>6M<span class="us"></span><span class="us"></span>         0</span></div>
</div>
<div class="a" style="left:346px;top:371px;width:652px;height:274px;background:#f6f5f4"></div>
<div class="a" style="left:348px;top:374px;width:642px;height:280px;background:#fff;border:1px solid #d6d2ce;border-radius:6px 6px 0 0"></div>
<div class="a" style="left:349px;top:375px;width:640px;height:24px;background:#e8e6e4;border-radius:5px 5px 0 0;border-bottom:1px solid #d6d2ce"></div>
<div class="a" style="left:349px;top:375px;width:90px;height:24px;background:#f6f5f4;border-radius:5px 5px 0 0;border-right:1px solid #d6d2ce"></div>
<div class="a" style="left:349px;top:399px;width:640px;height:17px;background:#f6f5f4;border-bottom:1px solid #dcd8d4"></div>
<svg style="left:352px;top:381px" width="12" height="13" viewBox="0 0 12 13"><rect x="0.5" y="0.5" width="7" height="11" fill="#f7f7f0" stroke="#b8c0a0"/><path d="M8.5 1.5Q8.5 0.5 9.5 0.5H10Q11 0.5 11 1.5V9.5H8.5z" fill="#dbe6f2" stroke="#a4b8d0" stroke-width="0.8"/><path d="M7.5 11.5H11.5" stroke="#3a64a8"/><circle cx="4.5" cy="3.5" r="2" fill="#e02828"/><rect x="0" y="6.5" width="6" height="6.5" fill="#e23a44"/><path d="M1.6 8.2L4.4 11.2M4.4 8.2L1.6 11.2" stroke="#fff" stroke-width="1"/></svg>
<div class="t" style="left:368.4px;top:378.50px;font-size:11.5px;line-height:18px;font-weight:normal;color:#2e3436;transform:scaleX(1.0212);transform-origin:0 0;">Problems</div>
<svg style="left:425px;top:384px" width="8" height="8" viewBox="0 0 8 8"><path d="M0.5 0.5L7.5 7.5M7.5 0.5L0.5 7.5" stroke="#3a3a3a" stroke-width="1.1"/></svg>
<svg style="left:441px;top:381px" width="12" height="12" viewBox="0 0 12 12"><rect x="3.5" y="1.5" width="8" height="10" rx="1" fill="#fbfbf8" stroke="#c9b48a"/><rect x="5.5" y="0" width="4" height="2.5" rx="1" fill="#9aa0a8"/><path d="M6 5h4M6 7h4M6 9h4" stroke="#a8b8d0" stroke-width="0.8"/><path d="M0.8 7.5L3 10L7.5 4.5" stroke="#1e7ae0" stroke-width="1.6" fill="none"/></svg>
<div class="t" style="left:457.1px;top:378.50px;font-size:11.5px;line-height:18px;font-weight:normal;color:#2e3436;transform:scaleX(0.9729);transform-origin:0 0;">Tasks</div>
<svg style="left:495px;top:381px" width="11" height="12" viewBox="0 0 11 12"><rect x="0.6" y="0.6" width="9.8" height="8.4" rx="1" fill="#eef3fa" stroke="#3560a8" stroke-width="1.2"/><path d="M2.5 3.2h3M2.5 5.2h5.5" stroke="#5a7ab0" stroke-width="0.8"/><path d="M2 11h7" stroke="#3560a8" stroke-width="1.6"/></svg>
<div class="t" style="left:509.7px;top:378.50px;font-size:11.5px;line-height:18px;font-weight:bold;color:#2e3436;transform:scaleX(0.9412);transform-origin:0 0;">Console</div>
<svg style="left:561px;top:382px" width="11" height="11" viewBox="0 0 11 11"><rect x="0.5" y="0.5" width="10" height="10" fill="#f4f7fb" stroke="#7a8aa8"/><path d="M0.5 2.5h10" stroke="#7a8aa8" stroke-width="1.5"/><path d="M1 5.5h9M1 8h9M4 3v7" stroke="#c0cadb" stroke-width="0.8"/></svg>
<div class="t" style="left:576.4px;top:378.50px;font-size:11.5px;line-height:18px;font-weight:normal;color:#2e3436;transform:scaleX(1.0494);transform-origin:0 0;">Properties</div>
<div class="a" style="left:884px;top:398px;width:106px;height:1px;background:#cfcbc7"></div>
<svg style="left:893px;top:381px" width="10" height="13" viewBox="0 0 10 13"><path d="M0.5 0.5h9Q9.5 3.5 6 5.5v7h-2v-7Q0.5 3.5 0.5 0.5z" fill="#dff0fb" stroke="#7a9cc0"/></svg>
<svg style="left:923px;top:381px" width="6" height="13" viewBox="0 0 6 13"><circle cx="3" cy="2.2" r="1.6" fill="none" stroke="#666"/><circle cx="3" cy="6.5" r="1.6" fill="none" stroke="#666"/><circle cx="3" cy="10.8" r="1.6" fill="none" stroke="#666"/></svg>
<div class="a" style="left:950px;top:383px;width:9px;height:4px;border:1px solid #3a3a3a;border-radius:1px;background:#f4f4f4"></div>
<div class="a" style="left:969px;top:383px;width:9px;height:9px;border:1px solid #3a3a3a;border-top-width:2px;background:linear-gradient(#d8d8d8,#fafafa)"></div>
<div class="t" style="left:349.5px;top:397.50px;font-size:11.5px;line-height:18px;font-weight:normal;color:#2e3436;transform:scaleX(1.0009);transform-origin:0 0;">7 errors, 4 warnings, 2 others</div>
<div class="t" style="left:353.1px;top:420.50px;font-size:11.5px;line-height:18px;font-weight:bold;color:#3a3a3a;transform:scaleX(0.9880);transform-origin:0 0;">Description</div>
<div class="a" style="left:993px;top:374px;width:20px;height:280px;background:linear-gradient(#e8e6e4 0 24px,#f2f1f0 24px);border:1px solid #d6d2ce;border-radius:6px 0 0 0"></div>
<div class="a" style="left:349px;top:417px;width:640px;height:228px;overflow:hidden">
<div class="a" style="left:0;top:24.30px;width:640px;height:17.93px;background:#0a5fec"></div>
<svg style="left:4px;top:32px" width="8" height="5" viewBox="0 0 8 5"><path d="M0.5 0.5L7.5 0.5L4 4.5z" fill="#fff"/></svg>
<svg style="left:17px;top:28px" width="10" height="10" viewBox="0 0 10 10"><circle cx="5" cy="5" r="4.6" fill="#e23a44"/><path d="M3.2 3.2L6.8 6.8M6.8 3.2L3.2 6.8" stroke="#fff" stroke-width="1.3"/></svg>
<div class="t" style="left:30px;top:24.30px;font-size:11.5px;line-height:18px;font-weight:normal;color:#fff;transform:scaleX(1.0161);transform-origin:0 0;">Errors (7 items)</div>
<svg style="left:31px;top:46px" width="10" height="10" viewBox="0 0 10 10"><circle cx="5" cy="5" r="4.6" fill="#e23a44"/><path d="M3.2 3.2L6.8 6.8M6.8 3.2L3.2 6.8" stroke="#fff" stroke-width="1.3"/></svg>
<div class="t" style="left:44px;top:42.23px;font-size:11.5px;line-height:18px;font-weight:normal;color:#2e3436;transform:scaleX(1.0096);transform-origin:0 0;">&#x27;IRQn_Type&#x27; undeclared (first use in this function)</div>
<svg style="left:31px;top:64px" width="10" height="10" viewBox="0 0 10 10"><circle cx="5" cy="5" r="4.6" fill="#e23a44"/><path d="M3.2 3.2L6.8 6.8M6.8 3.2L3.2 6.8" stroke="#fff" stroke-width="1.3"/></svg>
<div class="t" style="left:44px;top:60.16px;font-size:11.5px;line-height:18px;font-weight:normal;color:#2e3436;transform:scaleX(1.0188);transform-origin:0 0;">&#x27;SysTick&#x27; undeclared (first use in this function)</div>
<svg style="left:31px;top:82px" width="10" height="10" viewBox="0 0 10 10"><circle cx="5" cy="5" r="4.6" fill="#e23a44"/><path d="M3.2 3.2L6.8 6.8M6.8 3.2L3.2 6.8" stroke="#fff" stroke-width="1.3"/></svg>
<div class="t" style="left:44px;top:78.09px;font-size:11.5px;line-height:18px;font-weight:normal;color:#2e3436;transform:scaleX(1.0188);transform-origin:0 0;">&#x27;SysTick&#x27; undeclared (first use in this function)</div>
<svg style="left:31px;top:100px" width="10" height="10" viewBox="0 0 10 10"><circle cx="5" cy="5" r="4.6" fill="#e23a44"/><path d="M3.2 3.2L6.8 6.8M6.8 3.2L3.2 6.8" stroke="#fff" stroke-width="1.3"/></svg>
<div class="t" style="left:44px;top:96.02px;font-size:11.5px;line-height:18px;font-weight:normal;color:#2e3436;transform:scaleX(1.0188);transform-origin:0 0;">&#x27;SysTick&#x27; undeclared (first use in this function)</div>
<svg style="left:31px;top:118px" width="10" height="10" viewBox="0 0 10 10"><circle cx="5" cy="5" r="4.6" fill="#e23a44"/><path d="M3.2 3.2L6.8 6.8M6.8 3.2L3.2 6.8" stroke="#fff" stroke-width="1.3"/></svg>
<div class="t" style="left:44px;top:113.95px;font-size:11.5px;line-height:18px;font-weight:normal;color:#2e3436;transform:scaleX(1.0120);transform-origin:0 0;">#error &quot;Definition INCLUDE_xTaskGetCurrentTaskHandle must equal 1 to implement Thread Management API.&quot;</div>
<svg style="left:31px;top:136px" width="10" height="10" viewBox="0 0 10 10"><circle cx="5" cy="5" r="4.6" fill="#e23a44"/><path d="M3.2 3.2L6.8 6.8M6.8 3.2L3.2 6.8" stroke="#fff" stroke-width="1.3"/></svg>
<div class="t" style="left:44px;top:131.88px;font-size:11.5px;line-height:18px;font-weight:normal;color:#2e3436;transform:scaleX(0.9806);transform-origin:0 0;">#include expects &quot;FILENAME&quot; or &lt;FILENAME&gt;</div>
<svg style="left:31px;top:154px" width="10" height="10" viewBox="0 0 10 10"><circle cx="5" cy="5" r="4.6" fill="#e23a44"/><path d="M3.2 3.2L6.8 6.8M6.8 3.2L3.2 6.8" stroke="#fff" stroke-width="1.3"/></svg>
<div class="t" style="left:44px;top:149.81px;font-size:11.5px;line-height:18px;font-weight:normal;color:#2e3436;transform:scaleX(1.0165);transform-origin:0 0;">make: *** [Middlewares/Third_Party/FreeRTOS/Source/CMSIS_RTOS_V2/subdir.mk:19: Middlewares/Third_Party/FreeRTOS/Source/CMSIS_RTOS_V2/cmsis_os2.o] Error 1</div>
<svg style="left:6px;top:173px" width="5" height="8" viewBox="0 0 5 8"><path d="M0.5 0.5L4.5 4L0.5 7.5z" fill="#8c8c8c"/></svg>
<svg style="left:18px;top:172px" width="9" height="9" viewBox="0 0 9 9"><path d="M4.5 0.6Q5.2 0.6 5.6 1.4L8.4 7.4Q8.6 8.4 7.6 8.4H1.4Q0.4 8.4 0.6 7.4L3.4 1.4Q3.8 0.6 4.5 0.6z" fill="#f3c14a" stroke="#c98e24" stroke-width="0.8"/><path d="M4.5 2.8v3" stroke="#5a3a00" stroke-width="1.1"/><path d="M4.5 6.6v1" stroke="#5a3a00" stroke-width="1.1"/></svg>
<div class="t" style="left:30px;top:167.74px;font-size:11.5px;line-height:18px;font-weight:normal;color:#2e3436;transform:scaleX(1.0004);transform-origin:0 0;">Warnings (4 items)</div>
<svg style="left:6px;top:191px" width="5" height="8" viewBox="0 0 5 8"><path d="M0.5 0.5L4.5 4L0.5 7.5z" fill="#8c8c8c"/></svg>
<svg style="left:20px;top:190px" width="4" height="10" viewBox="0 0 4 10"><rect x="1.2" y="0" width="2" height="2" fill="#2340a0"/><path d="M0.6 3.6H2.2V9.2M0.2 9.3H4" stroke="#2340a0" stroke-width="1.2" fill="none"/></svg>
<div class="t" style="left:30px;top:185.67px;font-size:11.5px;line-height:18px;font-weight:normal;color:#2e3436;transform:scaleX(1.0185);transform-origin:0 0;">Infos (2 items)</div>
</div>
</body></html>
